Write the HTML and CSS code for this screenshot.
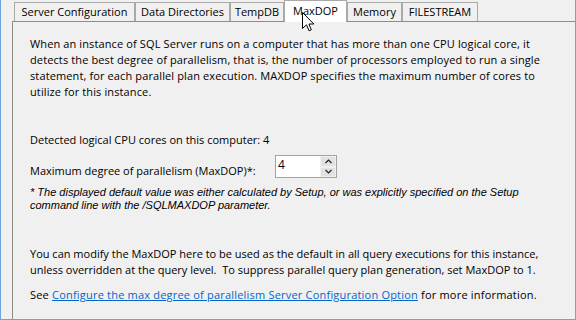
FILE: index.html
```html
<!DOCTYPE html>
<html>
<head>
<meta charset="utf-8">
<link rel="stylesheet" href="styles.css">
</head>
<body>
<div class="window">
  <div class="tabs">
    <div class="tab tab-server">Server Configuration</div>
    <div class="tab tab-data">Data Directories</div>
    <div class="tab tab-tempdb">TempDB</div>
    <div class="tab tab-maxdop active">MaxDOP</div>
    <div class="tab tab-memory">Memory</div>
    <div class="tab tab-filestream">FILESTREAM</div>
  </div>
  <div class="panel">
    <p class="intro">When an instance of SQL Server runs on a computer that has more than one CPU logical core, it<br>detects the best degree of parallelism, that is, the number of processors employed to run a single<br>statement, for each parallel plan execution. MAXDOP specifies the maximum number of cores to<br>utilize for this instance.</p>
    <p class="detected">Detected logical CPU cores on this computer: 4</p>
    <div class="maxdop-row">
      <span class="maxdop-label">Maximum degree of parallelism (MaxDOP)*:</span>
      <div class="spin">
        <span class="spin-value">4</span>
        <div class="spin-btns">
          <span class="spin-btn"><svg width="7" height="5" viewBox="0 0 7 5"><path d="M0.5 4 L3.5 1 L6.5 4" fill="none" stroke="#222" stroke-width="1.2"/></svg></span>
          <span class="spin-btn"><svg width="7" height="5" viewBox="0 0 7 5"><path d="M0.5 1 L3.5 4 L6.5 1" fill="none" stroke="#222" stroke-width="1.2"/></svg></span>
        </div>
      </div>
    </div>
    <p class="note">* The displayed default value was either calculated by Setup, or was explicitly specified on the Setup<br>command line with the /SQLMAXDOP parameter.</p>
    <p class="modify">You can modify the MaxDOP here to be used as the default in all query executions for this instance,<br>unless overridden at the query level.&nbsp; To suppress parallel query plan generation, set MaxDOP to 1.</p>
    <p class="see">See <a class="link" href="#">Configure the max degree of parallelism Server Configuration Option</a> for more information.</p>
  </div>
  <svg class="cursor" width="13" height="20" viewBox="0 0 13 20"><path d="M0.5 0.5 L0.5 16.5 L4.5 12.8 L7 18.8 L9.3 17.8 L6.9 12 L11.8 12 Z" fill="#fff" stroke="#000" stroke-width="1"/></svg>
</div>
</body>
</html>
```
FILE: styles.css
```css
* { box-sizing: border-box; }
html, body { margin: 0; padding: 0; }
body {
  background: #f0f0f0;
  font-family: "Open Sans", "Noto Sans", sans-serif;
  font-size: 11px;
  color: #000;
}
.window {
  position: relative;
  width: 576px;
  height: 320px;
  overflow: hidden;
  background: #f0f0f0;
  border-left: 1px solid #6aa6de;
  border-right: 1px solid #6aa6de;
  border-bottom: 1px solid #6aa6de;
  padding-left: 11px;
}
.tabs {
  display: flex;
  align-items: flex-end;
  height: 21px;
  margin-left: 2px;
  position: relative;
  z-index: 2;
}
.tab {
  height: 19px;
  line-height: 18px;
  text-align: center;
  border: 1px solid #a9a9a9;
  border-bottom: none;
  background: #f0f0f0;
  white-space: nowrap;
  flex: none;
}
.tab-server { width: 121px; }
.tab-data { width: 95px; }
.tab-tempdb { width: 54px; }
.tab-maxdop { width: 63px; }
.tab-memory { width: 55px; }
.tab-filestream { width: 76px; }
.tab.active {
  height: 22px;
  line-height: 20px;
  margin-bottom: -1px;
  background: #fff;
}
.panel {
  border-top: 1px solid #8c8c8c;
  border-left: 1px solid #8c8c8c;
  height: 400px;
  padding: 14px 0 0 17px;
  white-space: nowrap;
}
p { margin: 0; }
.intro { line-height: 16px; letter-spacing: 0.12px; }
.detected { margin-top: 32px; line-height: 16px; }
.maxdop-row {
  display: flex;
  margin-top: 7px;
  height: 23px;
}
.maxdop-label {
  width: 245px;
  margin-top: 8px;
  line-height: 16px;
}
.spin {
  display: flex;
  width: 62px;
  height: 23px;
  border: 1px solid #a3a3a3;
  background: #fff;
}
.spin-value {
  flex: 1;
  padding-left: 2px;
  line-height: 17px;
  font-size: 12px;
}
.spin-btns {
  display: flex;
  flex-direction: column;
  width: 16px;
  background: #f0f0f0;
}
.spin-btn {
  flex: 1;
  display: flex;
  align-items: center;
  justify-content: center;
  background: #e1e1e1;
  border: 1px solid #f0f0f0;
}
.note {
  margin-top: 8px;
  font-family: "Liberation Sans", Arial, sans-serif;
  font-style: italic;
  font-size: 11px;
  line-height: 13px;
}
.modify { margin-top: 34px; line-height: 16px; }
.see { margin-top: 9px; line-height: 16px; letter-spacing: 0.2px; }
.link { color: #0066cc; text-decoration: underline; }
.cursor {
  position: absolute;
  left: 301px;
  top: 12px;
  z-index: 5;
}
```
